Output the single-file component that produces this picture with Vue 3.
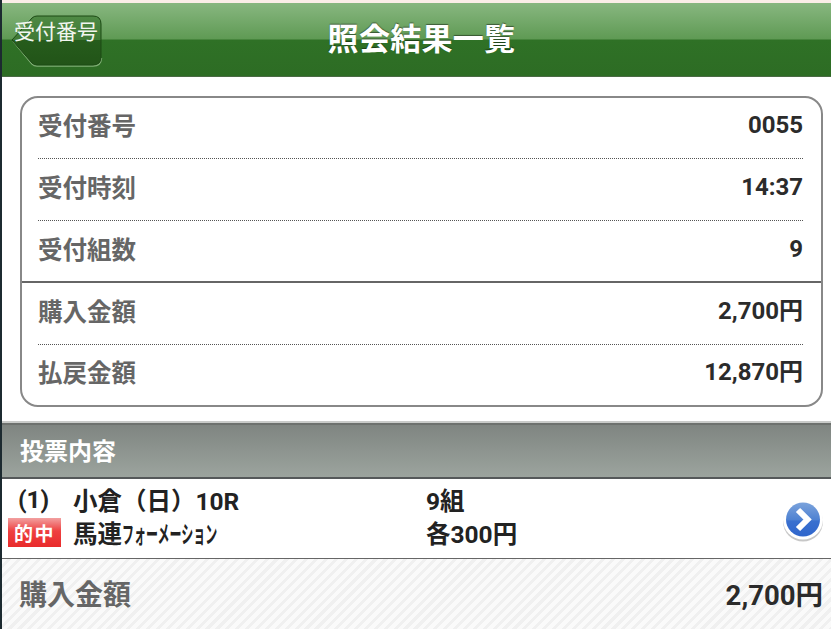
<script setup>
const rows = [
  { label: '受付番号', value: '0055' },
  { label: '受付時刻', value: '14:37' },
  { label: '受付組数', value: '9', solid: true },
  { label: '購入金額', value: '2,700円' },
  { label: '払戻金額', value: '12,870円' }
]
</script>

<template>
  <div class="page">
    <div class="topline"></div>
    <header class="header">
      <div class="back">
        <svg class="back-shape" width="92" height="54" viewBox="0 0 92 54">
          <defs>
            <linearGradient id="backFill" x1="0" y1="0" x2="0" y2="1">
              <stop offset="0" stop-color="#4f8a45" />
              <stop offset="0.48" stop-color="#3f7a35" />
              <stop offset="0.5" stop-color="#265c1c" />
              <stop offset="1" stop-color="#225418" />
            </linearGradient>
          </defs>
          <path d="M2 27 L21 50 Q23 52 26 52 L82 52 Q90 52 90.500 44" fill="none" stroke="#7fae74" stroke-width="1.500" />
          <path d="M1 26 L21 4 Q23 2 26 2 L82 2 Q90 2 90 10 L90 43 Q90 51 82 51 L26 51 Q23 51 21 49 Z" fill="url(#backFill)" stroke="#1d4a15" stroke-width="1" />
        </svg>
        <span class="back-text">受付番号</span>
      </div>
      <h1 class="title">照会結果一覧</h1>
    </header>

    <section class="card">
      <div v-for="row in rows" :key="row.label" class="row" :class="{ solid: row.solid }">
        <span class="label">{{ row.label }}</span>
        <span class="value">{{ row.value }}</span>
      </div>
    </section>

    <div class="section-head">投票内容</div>

    <div class="ticket">
      <div class="ticket-line first">
        <span class="num">(1)</span>
        <span class="race">小倉（日）10R</span>
        <span class="amount">9組</span>
      </div>
      <div class="ticket-line">
        <span class="hit">的中</span>
        <span class="race">馬連<span class="narrow">フォーメーション</span></span>
        <span class="amount">各300円</span>
      </div>
      <svg class="go" width="44" height="44" viewBox="0 0 44 44">
        <defs>
          <linearGradient id="goFill" x1="0" y1="0" x2="0" y2="1">
            <stop offset="0" stop-color="#7ba3dc" />
            <stop offset="0.5" stop-color="#4f82d2" />
            <stop offset="0.55" stop-color="#3a70cf" />
            <stop offset="1" stop-color="#2f66cc" />
          </linearGradient>
        </defs>
        <circle cx="22" cy="23.5" r="20" fill="#000" fill-opacity="0.22" />
        <circle cx="22" cy="21.5" r="20" fill="#fff" />
        <circle cx="22" cy="21.5" r="17" fill="url(#goFill)" />
        <path d="M17 12 L26.500 21.500 L17 31" fill="none" stroke="#fff" stroke-width="6" />
      </svg>
    </div>

    <footer class="total">
      <span class="total-label">購入金額</span>
      <span class="total-value">2,700円</span>
    </footer>
  </div>
</template>

<style>
html, body { margin: 0; background: #fff; }
</style>

<style scoped>
.page {
  width: 831px; height: 629px; overflow: hidden; box-sizing: border-box;
  border-left: 2px solid #1c2a30; background: #fff;
  font-family: "Roboto", "Noto Sans CJK JP", sans-serif;
  display: flex; flex-direction: column;
}
.topline { height: 3px; background: #fbeee8; }
.header {
  height: 74px; box-sizing: border-box; position: relative; padding-bottom: 6px;
  display: flex; align-items: center; justify-content: center;
  background: linear-gradient(#88b780 0, #5f9a54 36px, #2f7126 37px, #2d6c24 100%);
  border-bottom: 1px solid #4a6a44;
}
.title {
  margin: 0; font-size: 31px; font-weight: 700; color: #fff; line-height: 40px;
  font-family: "Noto Sans CJK JP", sans-serif; text-shadow: 0 -1px 1px rgba(0,0,0,.45);
  letter-spacing: 0.3px; transform: translateX(5px);
}
.back { position: absolute; left: 9px; top: 11px; width: 92px; height: 54px; }
.back-shape { display: block; }
.back-text {
  position: absolute; left: 3px; top: 1px; font-size: 21px; line-height: 30px; color: #f2f6f0;
  font-family: "Noto Sans CJK JP", sans-serif; white-space: nowrap;
}
.card {
  margin: 19px 8px 0 18px; height: 311px; box-sizing: border-box;
  border: 2px solid #888; border-radius: 18px; padding: 0 18px 0 16px;
  display: flex; flex-direction: column; flex: none;
}
.row {
  height: 62px; box-sizing: border-box; flex: none; padding-bottom: 6px;
  display: flex; align-items: center; justify-content: space-between;
  border-bottom: 1px dotted #555;
}
.row:first-child { height: 61px; }
.row:last-child { border-bottom: none; padding-bottom: 8px; }
.row.solid { border-bottom: none; position: relative; }
.row.solid::after {
  content: ''; position: absolute; left: -16px; right: -18px; bottom: 0; height: 2px; background: #666;
}
.label {
  font-size: 24.500px; font-weight: 700; color: #666;
  font-family: "Noto Sans CJK JP", sans-serif; line-height: 32px;
}
.value { font-size: 24px; font-weight: 700; color: #2b2b2b; line-height: 32px; }
.section-head {
  margin-top: 16px; height: 56px; box-sizing: border-box; flex: none; padding: 0 0 3px 18px;
  display: flex; align-items: center;
  background: linear-gradient(#7f8581, #9ca49e);
  border-top: 2px solid #6d716e; box-shadow: 0 -2px 0 #c9cbc9;
  border-bottom: 2px solid #55595a;
  color: #fff; font-size: 24px; font-weight: 700;
  font-family: "Noto Sans CJK JP", sans-serif;
}
.ticket {
  height: 80px; box-sizing: border-box; position: relative; flex: none;
  border-bottom: 1px solid #666; padding-top: 4px; background: #fff;
}
.ticket-line { display: flex; align-items: center; height: 33px; color: #222; font-size: 24.500px; font-weight: 500; }
.num { width: 71px; padding-left: 16px; box-sizing: border-box; font-weight: 700; }
.hit {
  width: 53px; height: 29px; margin: 0 12px 0 6px; flex: none; display: flex; align-items: center; justify-content: center;
  background: linear-gradient(#f2a0a0 0, #ee4040 45%, #e92b2b 100%);
  color: #fff; font-size: 19px; font-weight: 700; letter-spacing: 1.500px;
  font-family: "Noto Sans CJK JP", sans-serif;
}
.race { width: 353px; font-family: "Roboto", "Noto Sans CJK JP", sans-serif; font-weight: 700; white-space: nowrap; }
.narrow {
  display: inline-block; font-size: 24px; width: 98px; white-space: nowrap;
  transform: scaleX(0.5); transform-origin: left center;
}
.amount { font-weight: 700; }
.go { position: absolute; right: 6px; top: 19px; }
.total {
  flex: 1; display: flex; align-items: center; justify-content: space-between;
  padding: 0 8px 2px 17px; font-weight: 700;
  background: repeating-linear-gradient(135deg, #fafafa 0 4px, #f0f0f0 4px 7px);
}
.total-label { font-size: 28px; color: #666; font-family: "Noto Sans CJK JP", sans-serif; }
.total-value { font-size: 27.500px; color: #2b2b2b; }
</style>
